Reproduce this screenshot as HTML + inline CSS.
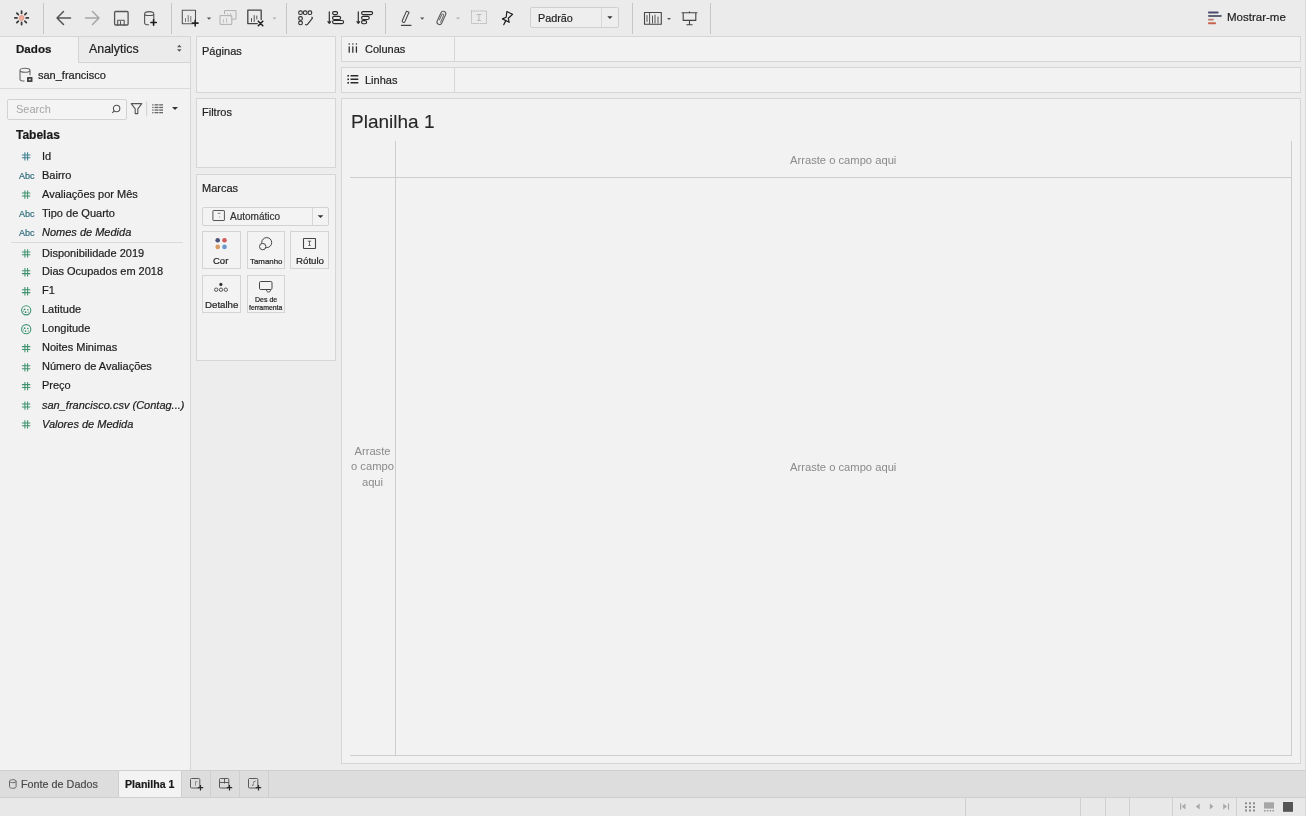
<!DOCTYPE html>
<html><head><meta charset="utf-8">
<style>
*{margin:0;padding:0;box-sizing:border-box}
html,body{width:1306px;height:816px;overflow:hidden;background:#ededed;font-family:"Liberation Sans",sans-serif;color:#1e1e1e}
.a{position:absolute;line-height:1;white-space:nowrap;-webkit-text-stroke-width:.2px}
body>div{will-change:transform}
.sep{position:absolute;width:1px;background:#c6c6c6;top:3px;height:31px}
.box{position:absolute;background:#f2f2f2;border:1px solid #d6d6d6}
.f{position:absolute;left:42px;font-size:11px;line-height:1;color:#1c1c1c;white-space:nowrap;-webkit-text-stroke-width:.2px}
.i{font-style:italic}
svg{position:absolute;overflow:visible}
</style></head><body>
<!-- ============ TOOLBAR ============ -->
<div class="a" style="left:0;top:0;width:1306px;height:36px;background:#ebebeb"></div>
<svg style="left:0;top:0" width="720" height="36" viewBox="0 0 720 36" fill="none" stroke-linecap="round" stroke-linejoin="round">
  <!-- logo -->
  <path d="M21.60 13.30L21.60 11.20M24.85 14.65L26.34 13.16M26.20 17.90L28.30 17.90M24.85 21.15L26.34 22.64M21.60 22.50L21.60 24.60M18.35 21.15L16.86 22.64M17.00 17.90L14.90 17.90M18.35 14.65L16.86 13.16" stroke="#3a3a3a" stroke-width="1.8" stroke-linecap="round"/>
  <circle cx="21.6" cy="17.9" r="2.8" fill="#e9a391" stroke="none"/>
  <circle cx="21.6" cy="17.9" r="1.1" fill="#f0b8a8" stroke="none"/>
  <!-- back -->
  <path d="M70.5 18H57M63.5 11.5L57 18l6.5 6.5" stroke="#555" stroke-width="1.5"/>
  <!-- forward -->
  <path d="M85.5 18H99M92.5 11.5L99 18l-6.5 6.5" stroke="#a6a6a6" stroke-width="1.5"/>
  <!-- save -->
  <rect x="114.6" y="11.5" width="13.5" height="13.5" rx="1" stroke="#555" stroke-width="1.3"/>
  <path d="M117.7 25v-4.8h6.5V25M120.5 21.5v3" stroke="#555" stroke-width="1.1"/>
  <!-- db + -->
  <path d="M144.6 14v9c0 1.2 1.9 1.8 4 1.8M144.6 14c0-1.3 2-2.4 4.6-2.4s4.6 1.1 4.6 2.4v5.5M144.6 14.2c0 .8 2 1.3 4.6 1.3s4.6-.5 4.6-1.3" stroke="#555" stroke-width="1.1"/>
  <path d="M153.6 19.8v5.4M150.9 22.5h5.4" stroke="#1a1a1a" stroke-width="1.6"/>
  <!-- new sheet -->
  <path d="M195.5 19.5v-9.2h-13.2v13.4h10.5" stroke="#555" stroke-width="1.1"/>
  <path d="M185.5 21.5v-3M188.2 21.5v-6M190.8 21.5v-5" stroke="#666" stroke-width="0.9"/>
  <path d="M195.2 20.2v5.8M192.3 23.1h5.8" stroke="#222" stroke-width="1.6"/>
  <path d="M206.8 17.5h4.4l-2.2 2.2z" fill="#555" stroke="none"/>
  <!-- duplicate -->
  <path d="M224.5 13.6v-3h11.5v8.5h-4" stroke="#b0b0b0" stroke-width="1"/>
  <rect x="220.4" y="15.6" width="11.4" height="8.8" stroke="#b0b0b0" stroke-width="1"/>
  <path d="M227.5 16v-2M230.5 16.5v-3M223.5 22.5v-3M226.5 22.5v-4" stroke="#b8b8b8" stroke-width=".8"/>
  <!-- clear -->
  <path d="M261.2 19.5v-9.3h-13.4v13.4h9.5" stroke="#444" stroke-width="1.3"/>
  <path d="M251.5 21.5v-3M254.2 21.5v-6M256.8 19v-3" stroke="#555" stroke-width="1"/>
  <path d="M258.3 21.2l4.5 4.5M262.8 21.2l-4.5 4.5" stroke="#222" stroke-width="1.6"/>
  <path d="M272.5 17.5h4l-2 2z" fill="#b0b0b0" stroke="none"/>
  <!-- swap -->
  <g stroke="#333" stroke-width="1.15">
    <rect x="298.7" y="10.9" width="3.6" height="3.6" rx="1.5"/><rect x="303.4" y="10.9" width="3.6" height="3.6" rx="1.5"/><rect x="308.1" y="10.9" width="3.6" height="3.6" rx="1.5"/>
    <rect x="298.7" y="16.6" width="3.6" height="3.6" rx="1.5"/><rect x="298.7" y="21.1" width="3.6" height="3.6" rx="1.5"/>
    <path d="M305.5 24.6c.6.5 1.4.3 2-.3l4.6-5.6c.4-.6.3-1.2-.2-1.5"/>
  </g>
  <!-- sort asc -->
  <g stroke="#2a2a2a" stroke-width="1.15">
    <path d="M329.3 11.8v11.4M327.9 21.6l1.4 1.8 1.4-1.8"/>
    <rect x="332.6" y="11.6" width="5" height="3" rx="1.5"/>
    <rect x="332.6" y="16.3" width="8" height="3.2" rx="1.5"/>
    <rect x="332.6" y="20.5" width="11" height="3.1" rx="1.5"/>
  </g>
  <!-- sort desc -->
  <g stroke="#2a2a2a" stroke-width="1.15">
    <path d="M358.3 11.8v11.4M356.9 21.6l1.4 1.8 1.4-1.8"/>
    <rect x="361.6" y="11.6" width="11" height="3" rx="1.5"/>
    <rect x="361.6" y="16.3" width="7.6" height="3.2" rx="1.5"/>
    <rect x="361.6" y="20.6" width="5" height="3.1" rx="1.5"/>
  </g>
  <!-- pen -->
  <g transform="translate(405.4 17) rotate(24)"><path d="M-1.4 -5.8h2.8v10.2a1.4 1.4 0 0 1-2.8 0z" stroke="#444" stroke-width="1.05"/></g>
  <path d="M401.5 25.3h9.5" stroke="#444" stroke-width="1.3"/>
  <path d="M420 17.5h4.4l-2.2 2.2z" fill="#555" stroke="none"/>
  <!-- clip -->
  <g transform="translate(441.4 17.9) rotate(25)"><rect x="-2.5" y="-7" width="5" height="14" rx="2.5" stroke="#5a5a5a" stroke-width="1.1"/><path d="M1 4.2V-3.2A1 1 0 0 0-1-3.2V2.5" stroke="#6a6a6a" stroke-width="1"/></g>
  <path d="M456 17.5h4l-2 2z" fill="#b0b0b0" stroke="none"/>
  <!-- dotted text -->
  <rect x="471.5" y="11" width="15" height="12.5" stroke="#bbbbbb" stroke-width="1" stroke-dasharray="0.9 1.3"/>
  <path d="M477 14.5h4M479 14.5v6M477.5 20.5h3" stroke="#b5b5b5" stroke-width=".9"/>
  <!-- pin -->
  <g transform="translate(505.8 20.6) rotate(27)"><path d="M-3.2 -8.6H3.2L1.2 -3.2 3.8 0H-3.8L-1.2 -3.2z" stroke="#1e1e1e" stroke-width="1.2" stroke-linejoin="round"/><path d="M0 0.3V4.6" stroke="#1e1e1e" stroke-width="1.2"/></g>
  <!-- dropdown arrow fit -->
  <path d="M667 18h4l-2 2z" fill="#555" stroke="none"/>
  <!-- fit -->
  <rect x="644.5" y="12.5" width="16.8" height="11.8" stroke="#444" stroke-width="1.1"/>
  <path d="M649.6 13v11M647 15.5v6M652.5 16v7M655 15v8M658 17v6" stroke="#555" stroke-width="1"/>
  <!-- presentation -->
  <path d="M682 12.8h15M683.2 12.8v7.6h12.6v-7.6M689.5 20.4v4.3M686.8 24.8h5.4M689.5 11.8v1" stroke="#444" stroke-width="1.1"/>
</svg>
<div class="sep" style="left:43px"></div>
<div class="sep" style="left:171px"></div>
<div class="sep" style="left:286px"></div>
<div class="sep" style="left:385px"></div>
<div class="sep" style="left:632px"></div>
<div class="sep" style="left:710px"></div>
<!-- Padrao dropdown -->
<div class="a" style="left:530px;top:7px;width:89px;height:21px;background:#eeeeee;border:1px solid #cfcfcf;border-radius:2px"></div>
<div class="a" style="left:601px;top:8px;width:1px;height:19px;background:#d8d8d8"></div>
<div class="a" style="left:537.5px;top:12.5px;font-size:10.8px;color:#222">Padrão</div>
<svg style="left:0;top:0" width="720" height="36"><path d="M607.3 16.3h5.2l-2.6 2.6z" fill="#333"/></svg>
<!-- Show me -->
<svg style="left:1205px;top:8px" width="20" height="20">
  <rect x="3" y="3.5" width="10.6" height="2" rx=".8" fill="#4b4b6f"/>
  <rect x="3" y="7" width="13.8" height="1.9" rx=".8" fill="#5d6374"/>
  <rect x="3" y="10.7" width="5.8" height="1.8" rx=".8" fill="#b67c70"/>
  <rect x="3" y="14.2" width="8" height="2" rx=".8" fill="#c9624f"/>
</svg>
<div class="a" style="left:1227px;top:11.8px;font-size:11.5px;color:#222">Mostrar-me</div>

<!-- ============ LEFT DATA PANEL ============ -->
<div class="a" style="left:0;top:36px;width:191px;height:734px;background:#f2f2f2;border-right:1px solid #d6d6d6;border-top:1px solid #d6d6d6"></div>
<div class="a" style="left:78px;top:36px;width:112px;height:27px;border-top:1px solid #d6d6d6;background:#ebebeb;border-left:1px solid #d4d4d4;border-bottom:1px solid #d4d4d4"></div>
<div class="a" style="left:16px;top:43.2px;font-size:11.6px;font-weight:bold;color:#1a1a1a">Dados</div>
<div class="a" style="left:88.8px;top:43px;font-size:12.4px;color:#222">Analytics</div>
<svg style="left:176px;top:44px" width="8" height="9"><path d="M1 3.3L3.3.8 5.6 3.3zM1 5.3l2.3 2.5 2.3-2.5z" fill="#555"/></svg>
<svg style="left:18px;top:66px" width="18" height="18" fill="none">
  <path d="M2 4.2v9c0 1 1.7 1.8 4.5 1.8M2 4.2c0-1.2 2-2 5-2s5 .8 5 2v5M2 4.2c0 1.2 2 2 5 2s5-.8 5-2" stroke="#666" stroke-width="1.1"/>
  <rect x="9" y="11" width="5.5" height="5" rx=".5" fill="#444"/>
  <path d="M10.8 13.5h2M11.8 12.5v2" stroke="#ddd" stroke-width=".8"/>
</svg>
<div class="a" style="left:38px;top:69.9px;font-size:11px;color:#222">san_francisco</div>
<div class="a" style="left:0;top:88px;width:190px;height:1px;background:#dadada"></div>
<!-- search -->
<div class="a" style="left:7px;top:99px;width:120px;height:21px;background:#f4f4f4;border:1px solid #d2d2d2;border-radius:2px"></div>
<div class="a" style="left:15.5px;top:104px;font-size:11px;color:#a5a5a5;-webkit-text-stroke-width:0">Search</div>
<svg style="left:108px;top:100px" width="80" height="20" fill="none">
  <circle cx="8.6" cy="8.5" r="3.2" stroke="#555" stroke-width="1.1"/>
  <path d="M6.3 10.8L4.3 12.8" stroke="#555" stroke-width="1.2"/>
  <path d="M23.2 3.6h10.6l-4 5.2v4.8h-2.6v-4.8z" stroke="#555" stroke-width="1.1" stroke-linejoin="round"/>
  <path d="M38.7 1.5v15" stroke="#d0d0d0" stroke-width="1"/>
  <g fill="#666"><rect x="44.2" y="4.2" width="1.3" height="1.3"/><rect x="46.5" y="4.2" width="4" height="1.3"/><rect x="51.2" y="4.2" width="3.8" height="1.3"/><rect x="44.2" y="6.8" width="1.3" height="1.3"/><rect x="46.5" y="6.8" width="4" height="1.3"/><rect x="51.2" y="6.8" width="3.8" height="1.3"/><rect x="44.2" y="9.4" width="1.3" height="1.3"/><rect x="46.5" y="9.4" width="4" height="1.3"/><rect x="51.2" y="9.4" width="3.8" height="1.3"/><rect x="44.2" y="12.0" width="1.3" height="1.3"/><rect x="46.5" y="12.0" width="4" height="1.3"/><rect x="51.2" y="12.0" width="3.8" height="1.3"/></g>
  <path d="M64 7h6l-3 3z" fill="#333"/>
</svg>
<div class="a" style="left:16px;top:128.5px;font-size:12px;font-weight:bold;color:#1a1a1a">Tabelas</div>
<!-- field list -->
<svg style="left:0;top:0" width="40" height="440" fill="none">
<g stroke="#3b7f8e" stroke-width="1.05"><path d="M24.9 152.3v8.3M27.6 152.3v8.3M21.9 154.9h8.4M21.9 157.8h8.4"/></g>
<g stroke="#3f936f" stroke-width="1.05"><path d="M24.9 190.4v8.3M27.6 190.4v8.3M21.9 193.0h8.4M21.9 195.9h8.4"/></g>
<g stroke="#3f936f" stroke-width="1.05"><path d="M24.9 249.3v8.3M27.6 249.3v8.3M21.9 251.9h8.4M21.9 254.8h8.4"/></g>
<g stroke="#3f936f" stroke-width="1.05"><path d="M24.9 268.1v8.3M27.6 268.1v8.3M21.9 270.7h8.4M21.9 273.6h8.4"/></g>
<g stroke="#3f936f" stroke-width="1.05"><path d="M24.9 287.1v8.3M27.6 287.1v8.3M21.9 289.7h8.4M21.9 292.6h8.4"/></g>
<g stroke="#3f9574" stroke-width="1.1"><circle cx="26.2" cy="310.3" r="4.6"/></g><g fill="#3f8f70"><circle cx="24.6" cy="309.3" r=".9"/><circle cx="27.8" cy="309.7" r=".8"/><circle cx="25.6" cy="312.2" r=".9"/><circle cx="23.4" cy="311.1" r=".6"/><circle cx="28.4" cy="312.1" r=".6"/></g>
<g stroke="#3f9574" stroke-width="1.1"><circle cx="26.2" cy="329.2" r="4.6"/></g><g fill="#3f8f70"><circle cx="24.6" cy="328.2" r=".9"/><circle cx="27.8" cy="328.6" r=".8"/><circle cx="25.6" cy="331.1" r=".9"/><circle cx="23.4" cy="330.0" r=".6"/><circle cx="28.4" cy="331.0" r=".6"/></g>
<g stroke="#3f936f" stroke-width="1.05"><path d="M24.9 344.0v8.3M27.6 344.0v8.3M21.9 346.6h8.4M21.9 349.5h8.4"/></g>
<g stroke="#3f936f" stroke-width="1.05"><path d="M24.9 363.2v8.3M27.6 363.2v8.3M21.9 365.8h8.4M21.9 368.7h8.4"/></g>
<g stroke="#3f936f" stroke-width="1.05"><path d="M24.9 382.0v8.3M27.6 382.0v8.3M21.9 384.6h8.4M21.9 387.5h8.4"/></g>
<g stroke="#3f936f" stroke-width="1.05"><path d="M24.9 401.4v8.3M27.6 401.4v8.3M21.9 404.0h8.4M21.9 406.9h8.4"/></g>
<g stroke="#3f936f" stroke-width="1.05"><path d="M24.9 420.3v8.3M27.6 420.3v8.3M21.9 422.9h8.4M21.9 425.8h8.4"/></g>
</svg>
<div class="f" style="top:150.5px">Id</div>
<div class="f" style="top:169.6px">Bairro</div>
<div class="a" style="left:19px;top:172.3px;font-size:9px;color:#2f6c7c">Abc</div>
<div class="f" style="top:188.6px">Avaliações por Mês</div>
<div class="f" style="top:207.5px">Tipo de Quarto</div>
<div class="a" style="left:19px;top:210.2px;font-size:9px;color:#2f6c7c">Abc</div>
<div class="f i" style="top:226.6px">Nomes de Medida</div>
<div class="a" style="left:19px;top:229.3px;font-size:9px;color:#2f6c7c">Abc</div>
<div class="f" style="top:247.5px">Disponibilidade 2019</div>
<div class="f" style="top:266.3px">Dias Ocupados em 2018</div>
<div class="f" style="top:285.3px">F1</div>
<div class="f" style="top:304.4px">Latitude</div>
<div class="f" style="top:323.3px">Longitude</div>
<div class="f" style="top:342.2px">Noites Minimas</div>
<div class="f" style="top:361.4px">Número de Avaliações</div>
<div class="f" style="top:380.2px">Preço</div>
<div class="f i" style="top:399.6px">san_francisco.csv (Contag...)</div>
<div class="f i" style="top:418.5px">Valores de Medida</div>

<div class="a" style="left:11px;top:242px;width:172px;height:1px;background:#dadada"></div>

<!-- ============ MIDDLE CARDS ============ -->
<div class="box" style="left:196px;top:36px;width:140px;height:57px"></div>
<div class="a" style="left:202px;top:45.8px;font-size:11px">Páginas</div>
<div class="box" style="left:196px;top:98px;width:140px;height:70px"></div>
<div class="a" style="left:202px;top:107.2px;font-size:11px">Filtros</div>
<div class="box" style="left:196px;top:174px;width:140px;height:187px"></div>
<div class="a" style="left:201.5px;top:182.5px;font-size:11px">Marcas</div>
<!-- marks type dropdown -->
<div class="a" style="left:202px;top:207px;width:127px;height:19px;background:#f3f3f3;border:1px solid #d2d2d2;border-radius:2px"></div>
<div class="a" style="left:312px;top:208px;width:1px;height:17px;background:#d6d6d6"></div>
<div class="a" style="left:229.5px;top:212px;font-size:10px;color:#333">Automático</div>
<!-- mark buttons -->
<div class="a" style="left:202px;top:231px;width:39px;height:38px;background:#f3f3f3;border:1px solid #d4d4d4"></div>
<div class="a" style="left:247px;top:231px;width:38px;height:38px;background:#f3f3f3;border:1px solid #d4d4d4"></div>
<div class="a" style="left:290px;top:231px;width:39px;height:38px;background:#f3f3f3;border:1px solid #d4d4d4"></div>
<div class="a" style="left:202px;top:275px;width:39px;height:38px;background:#f3f3f3;border:1px solid #d4d4d4"></div>
<div class="a" style="left:247px;top:275px;width:38px;height:38px;background:#f3f3f3;border:1px solid #d4d4d4"></div>
<div class="a" style="left:213.3px;top:255.8px;font-size:9.5px;color:#222">Cor</div>
<div class="a" style="left:249.5px;top:257.6px;font-size:7.9px;color:#222">Tamanho</div>
<div class="a" style="left:295.5px;top:256.2px;font-size:9.7px;color:#222">Rótulo</div>
<div class="a" style="left:204.8px;top:300.3px;font-size:9.7px;color:#222">Detalhe</div>
<div class="a" style="left:254.5px;top:295.8px;font-size:7px;color:#222">Des de</div>
<div class="a" style="left:249px;top:304.6px;font-size:6.9px;color:#222">ferramenta</div>
<svg style="left:0;top:0" width="340" height="320" fill="none">
  <rect x="212.9" y="210.5" width="11.5" height="10" rx=".5" stroke="#555" stroke-width="1"/>
  <path d="M217.8 213.3h2.6" stroke="#777" stroke-width="1"/><path d="M219.6 216.3v1.4" stroke="#aaa" stroke-width="1"/>
  <path d="M317.6 215.2h5.8l-2.9 2.9z" fill="#333"/>
  <circle cx="217.7" cy="240.2" r="2.3" fill="#4e5479"/>
  <circle cx="224.5" cy="240.2" r="2.3" fill="#d25a57"/>
  <circle cx="217.7" cy="246.9" r="2.3" fill="#da9a63"/>
  <circle cx="224.5" cy="246.9" r="2.3" fill="#6a98cc"/>
  <circle cx="266.7" cy="242.6" r="5" stroke="#444" stroke-width="1"/>
  <circle cx="262.7" cy="246.6" r="3.2" fill="#f3f3f3" stroke="#444" stroke-width="1"/>
  <rect x="303.5" y="238.5" width="12" height="10" rx=".5" stroke="#444" stroke-width="1.1"/>
  <path d="M307.8 241.2h3.4M309.5 241.2v4.3M308.4 245.5h2.3" stroke="#555" stroke-width=".9"/>
  <circle cx="220.9" cy="284.4" r="1.6" fill="#333"/>
  <circle cx="216.2" cy="289.7" r="1.7" stroke="#444" stroke-width=".9"/>
  <circle cx="221" cy="289.7" r="1.7" stroke="#444" stroke-width=".9"/>
  <circle cx="225.8" cy="289.7" r="1.7" stroke="#444" stroke-width=".9"/>
  <rect x="259.5" y="281.5" width="12.5" height="8" rx="1.2" stroke="#444" stroke-width="1"/>
  <path d="M266.5 289.8c0 1.5 .7 2.2 2 2.2s2-.7 2-2" stroke="#444" stroke-width="1"/>
</svg>

<!-- ============ SHELVES ============ -->
<div class="box" style="left:341px;top:36px;width:960px;height:26px"></div>
<div class="a" style="left:454px;top:37px;width:1px;height:24px;background:#d6d6d6"></div>
<div class="a" style="left:365px;top:43.8px;font-size:11px">Colunas</div>
<div class="box" style="left:341px;top:67px;width:960px;height:26px"></div>
<div class="a" style="left:454px;top:68px;width:1px;height:24px;background:#d6d6d6"></div>
<div class="a" style="left:365.4px;top:74.5px;font-size:11px">Linhas</div>
<svg style="left:340px;top:35px" width="30" height="60">
  <g fill="#2a2a2a"><circle cx="9.2" cy="9" r=".75"/><rect x="8.6" y="11.3" width="1.25" height="6.4" rx=".5"/>
  <circle cx="12.8" cy="9" r=".75"/><rect x="12.2" y="11.3" width="1.25" height="6.4" rx=".5"/>
  <circle cx="16.4" cy="9" r=".75"/><rect x="15.8" y="11.3" width="1.25" height="6.4" rx=".5"/>
  <rect x="7.4" y="40" width="1.6" height="1.6"/><rect x="10.5" y="40" width="7.8" height="1.5"/>
  <rect x="7.4" y="43.5" width="1.6" height="1.6"/><rect x="10.5" y="43.5" width="7.8" height="1.5"/>
  <rect x="7.4" y="47" width="1.6" height="1.6"/><rect x="10.5" y="47" width="7.8" height="1.5"/></g>
</svg>

<!-- ============ CANVAS ============ -->
<div class="box" style="left:341px;top:98px;width:960px;height:666px;background:#f2f2f2"></div>
<div class="a" style="left:351px;top:112px;font-size:19px;color:#262626;-webkit-text-stroke-width:.1px">Planilha 1</div>
<div class="a" style="left:395px;top:141px;width:1px;height:615px;background:#cdcdcd"></div>
<div class="a" style="left:1291px;top:141px;width:1px;height:615px;background:#cdcdcd"></div>
<div class="a" style="left:350px;top:177px;width:942px;height:1px;background:#cdcdcd"></div>
<div class="a" style="left:350px;top:755px;width:942px;height:1px;background:#cdcdcd"></div>
<div class="a" style="left:790px;top:154.5px;font-size:11.2px;color:#8a8a8a;-webkit-text-stroke-width:0">Arraste o campo aqui</div>
<div class="a" style="left:790px;top:461.5px;font-size:11.2px;color:#8a8a8a;-webkit-text-stroke-width:0">Arraste o campo aqui</div>
<div class="a" style="left:350px;top:444.2px;width:45px;font-size:11.2px;line-height:15.4px;color:#8a8a8a;-webkit-text-stroke-width:0;text-align:center;white-space:normal">Arraste o campo aqui</div>

<!-- ============ BOTTOM ============ -->
<div class="a" style="left:0;top:770px;width:1306px;height:28px;background:#dddddd;border-top:1px solid #cfcfcf;border-bottom:1px solid #cfcfcf"></div>
<div class="a" style="left:0;top:798px;width:1306px;height:18px;background:#e8e8e8"></div>
<div class="a" style="left:119px;top:771px;width:62px;height:26px;background:#f3f3f3"></div>
<div class="a" style="left:118px;top:771px;width:1px;height:26px;background:#cfcfcf"></div>
<div class="a" style="left:181px;top:771px;width:1px;height:26px;background:#cfcfcf"></div>
<div class="a" style="left:210px;top:771px;width:1px;height:26px;background:#cfcfcf"></div>
<div class="a" style="left:239px;top:771px;width:1px;height:26px;background:#cfcfcf"></div>
<div class="a" style="left:268px;top:771px;width:1px;height:26px;background:#cfcfcf"></div>
<div class="a" style="left:21.4px;top:778.6px;font-size:10.8px;color:#4a4a4a">Fonte de Dados</div>
<div class="a" style="left:125px;top:778.6px;font-size:10.6px;font-weight:bold;color:#1a1a1a">Planilha 1</div>
<svg style="left:0;top:0" width="1306" height="816" fill="none">
  <path d="M9.5 781.2v5.6c0 .9 1.6 1.5 3.3 1.5s3.3-.6 3.3-1.5v-5.6M9.5 781.2c0-.9 1.6-1.5 3.3-1.5s3.3.6 3.3 1.5-1.6 1.5-3.3 1.5-3.3-.6-3.3-1.5" stroke="#666" stroke-width="1"/>
  <!-- new sheet tab icons -->
  <g stroke="#5a5a5a" stroke-width="1">
    <rect x="190.5" y="778.5" width="9.3" height="9.5" rx="1"/>
    <path d="M195 781.8h2.5M195.5 781.8v4" stroke="#888" stroke-width=".9"/>
    <rect x="219.5" y="778.5" width="9.3" height="9.5" rx="1"/>
    <path d="M219.5 782.5h9.3M224.5 779v4.5" />
    <rect x="248.5" y="778.5" width="9.3" height="9.5" rx="1"/>
    <path d="M252.5 786l1-2.5M253 782.5l2.5-1.5" stroke="#666" stroke-width="1"/>
  </g>
  <g stroke="#2a2a2a" stroke-width="1.2">
    <path d="M200.5 785v5.5M197.8 787.7h5.4"/>
    <path d="M229.5 785v5.5M226.8 787.7h5.4"/>
    <path d="M258.5 785v5.5M255.8 787.7h5.4"/>
  </g>
  <!-- status bar -->
  <g stroke="#cfcfcf" stroke-width="1">
    <path d="M965.5 798v18M1080.5 798v18M1105.5 798v18M1129.5 798v18M1172.5 798v18M1236.5 798v18"/>
  </g>
  <g fill="#a9a9a9">
    <rect x="1180" y="803.4" width="1.2" height="6.2"/><path d="M1185.5 803.4v6.2l-3.8-3.1z"/>
    <path d="M1199.7 803.4v6.2l-3.9-3.1z"/>
    <path d="M1209.8 803.4v6.2l3.7-3.1z"/>
    <path d="M1223.2 803.4v6.2l3.8-3.1z"/><rect x="1227.9" y="803.4" width="1.2" height="6.2"/>
  </g>
  <g fill="#8d8d8d">
    <rect x="1245" y="802.3" width="2" height="2"/><rect x="1249" y="802.3" width="2" height="2"/><rect x="1253" y="802.3" width="2" height="2"/>
    <rect x="1245" y="806" width="2" height="2"/><rect x="1249" y="806" width="2" height="2"/><rect x="1253" y="806" width="2" height="2"/>
    <rect x="1245" y="809.5" width="2" height="2"/><rect x="1249" y="809.5" width="2" height="2"/><rect x="1253" y="809.5" width="2" height="2"/>
  </g>
  <rect x="1264" y="802.3" width="10" height="6.3" fill="#a6a6a6"/>
  <g fill="#999"><rect x="1264" y="810" width="1.6" height="1.5"/><rect x="1266.8" y="810" width="1.6" height="1.5"/><rect x="1269.6" y="810" width="1.6" height="1.5"/><rect x="1272.4" y="810" width="1.6" height="1.5"/></g>
  <rect x="1283" y="802" width="10" height="9.8" fill="#555"/>
</svg>
<div class="a" style="left:1305px;top:0;width:1px;height:816px;background:#d9d9d9"></div>
</body></html>
